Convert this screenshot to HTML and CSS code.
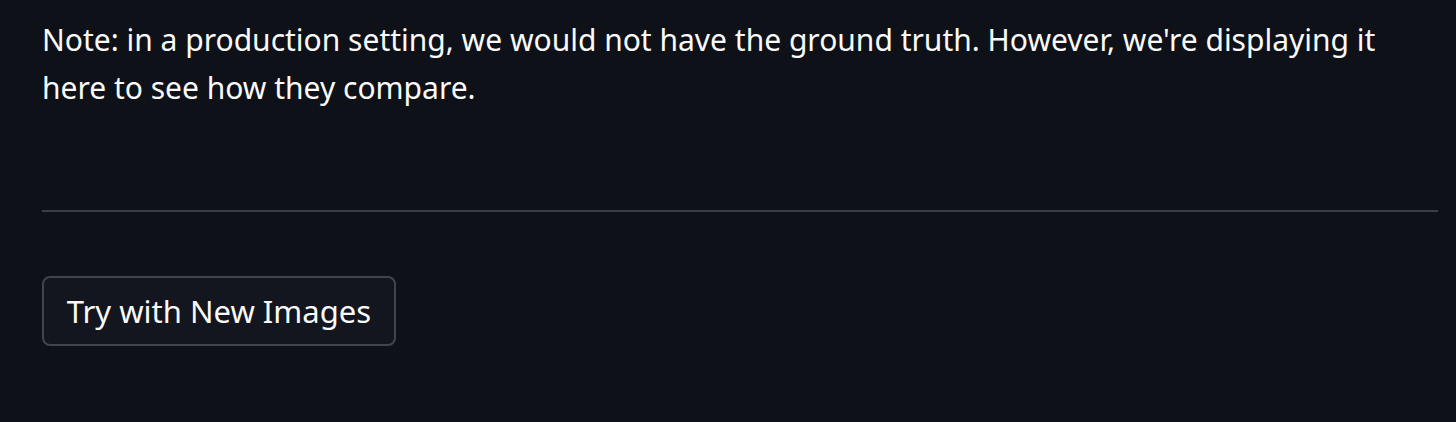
FILE: index.html
```html
<!DOCTYPE html>
<html lang="en">
<head>
<meta charset="utf-8">
<link rel="stylesheet" href="styles.css">
</head>
<body>
<main class="page">
  <p class="note">Note: in a production setting, we would not have the ground truth. However, we're displaying it here to see how they compare.</p>
  <hr class="divider">
  <div class="actions">
    <button class="btn" type="button">Try with New Images</button>
  </div>
</main>
</body>
</html>
```

FILE: styles.css
```css
html, body {
  margin: 0;
  padding: 0;
  background: #0e1117;
}
body {
  font-family: "Noto Sans", "Open Sans", sans-serif;
  color: #fafafa;
  width: 1456px;
  height: 422px;
  overflow: hidden;
}
.page {
  padding: 16px 18px 0 42px;
  width: 1396px;
}
.note {
  margin: 0;
  max-width: 1372px;
  font-size: 30px;
  line-height: 48px;
}
.divider {
  margin: 98px 0 0 0;
  border: none;
  height: 2px;
  background: #3a3d44;
}
.actions {
  padding-top: 64px;
}
.btn {
  font-family: inherit;
  font-size: 31px;
  color: #fafafa;
  background: #13161e;
  border: 2px solid #41444c;
  border-radius: 8px;
  height: 70px;
  width: 354px;
  padding: 0;
}
```
